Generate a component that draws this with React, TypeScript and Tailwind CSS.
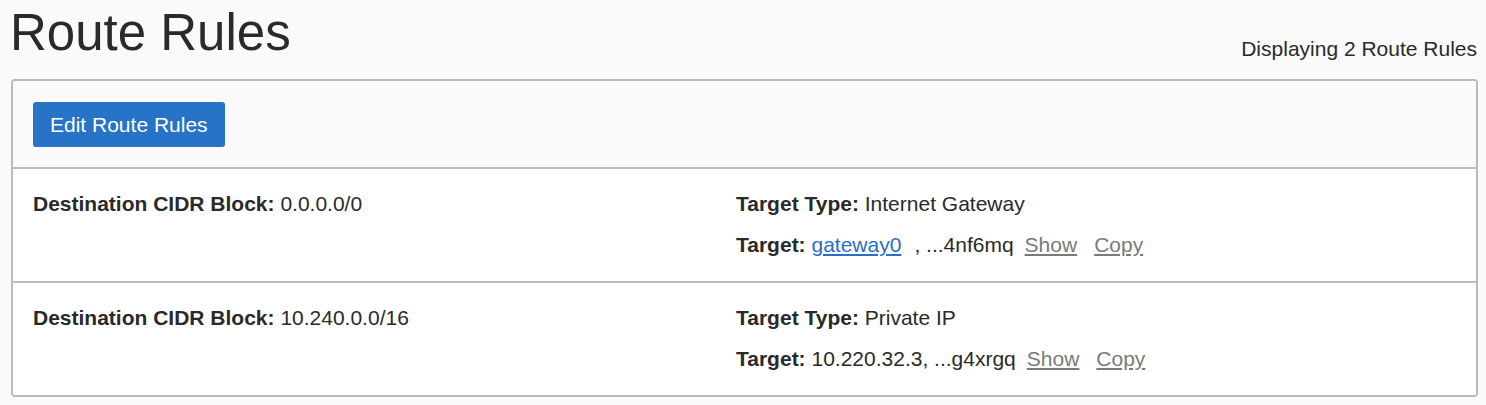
const rules = [
  {
    cidr: '0.0.0.0/0',
    type: 'Internet Gateway',
    link: 'gateway0',
    ocid: '...4nf6mq',
  },
  {
    cidr: '10.240.0.0/16',
    type: 'Private IP',
    link: null,
    ocid: '10.220.32.3, ...g4xrgq',
  },
];

export default function App() {
  return (
    <div
      className="min-h-screen bg-[#fafafa] text-[#2a2a2a] text-[21px]"
      style={{ fontFamily: '"Liberation Sans", Arial, sans-serif' }}
    >
      {/* Page header */}
      <div className="flex items-end justify-between pt-[3px] pl-[10px] pr-[9px]">
        <h1 className="text-[51px] leading-[60px] font-normal">Route Rules</h1>
        <span className="leading-[31px] mb-[-1px]">Displaying 2 Route Rules</span>
      </div>

      {/* Rules card */}
      <div className="mt-[16px] ml-[11px] mr-[8px] border-2 border-[#b7bbc0] rounded-[4px] overflow-hidden">
        <div className="bg-[#fafafa] px-[20px] pt-[21px] pb-[20px] border-b-2 border-[#b9bdc2]">
          <button className="h-[45px] px-[17px] rounded-[3px] bg-[#2673c8] text-white leading-[45px]">
            Edit Route Rules
          </button>
        </div>

        {rules.map((rule, i) => (
          <div
            key={rule.cidr}
            className={
              i < rules.length - 1
                ? 'flex bg-white px-[20px] pt-[19px] pb-[21px] border-b-2 border-[#b9bdc2]'
                : 'flex bg-white px-[20px] pt-[19px] pb-[21px]'
            }
          >
            <div className="w-[703px] leading-[31px]">
              <span className="font-bold">Destination CIDR Block:</span> {rule.cidr}
            </div>
            <div className="flex flex-col gap-[10px] leading-[31px]">
              <div>
                <span className="font-bold">Target Type:</span> {rule.type}
              </div>
              <div className="whitespace-nowrap">
                <span className="font-bold">Target:</span>{' '}
                {rule.link ? (
                  <>
                    <a href="#" className="text-[#2a6fc7] underline">
                      {rule.link}
                    </a>
                    <span className="ml-[13px]">, {rule.ocid}</span>
                  </>
                ) : (
                  <span>{rule.ocid}</span>
                )}
                <a href="#" className="ml-[11px] text-[#7a7a7a] underline">
                  Show
                </a>
                <a href="#" className="ml-[17px] text-[#7a7a7a] underline">
                  Copy
                </a>
              </div>
            </div>
          </div>
        ))}
      </div>
    </div>
  );
}
